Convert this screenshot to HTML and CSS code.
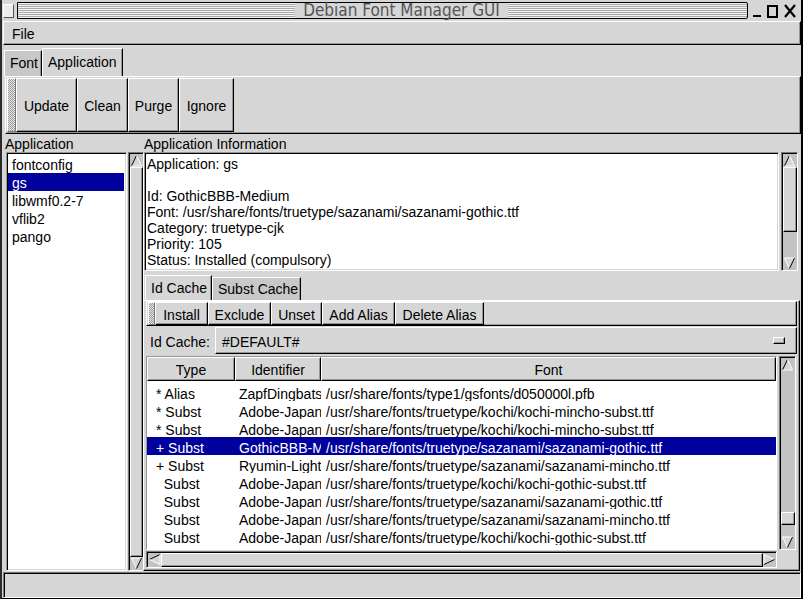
FILE: index.html
```html
<!DOCTYPE html>
<html>
<head>
<meta charset="utf-8">
<link rel="stylesheet" href="styles.css">
</head>
<body>
<div class="win">
  <div class="titlebar">
    <div class="ticon"></div>
    <div class="tstripe"><span class="ttext">Debian Font Manager GUI</span></div>
    <svg class="tbtns" width="48" height="18" viewBox="0 0 48 18">
      <rect x="1" y="13" width="8" height="2" fill="#000"/>
      <rect x="16" y="4" width="9" height="11" fill="none" stroke="#000" stroke-width="2"/>
      <path d="M33 3 L43 15 M43 3 L33 15" stroke="#000" stroke-width="2.2" fill="none"/>
    </svg>
  </div>
  <div class="menubar"><span class="menuitem">File</span></div>
  <div class="tabs">
    <div class="tab inactive t-font">Font</div>
    <div class="tab active t-app">Application</div>
  </div>
  <div class="page">
    <div class="toolbar big">
      <div class="handle"></div>
      <div class="tbtn b-update">Update</div>
      <div class="tbtn b-clean">Clean</div>
      <div class="tbtn b-purge">Purge</div>
      <div class="tbtn b-ignore">Ignore</div>
    </div>
    <div class="panes">
      <div class="leftpane">
        <div class="lbl">Application</div>
        <div class="listwrap">
          <div class="list">
            <div class="li">fontconfig</div>
            <div class="li sel">gs</div>
            <div class="li">libwmf0.2-7</div>
            <div class="li">vflib2</div>
            <div class="li">pango</div>
          </div>
          <div class="vs vs-left">
            <div class="arr"><svg width="13" height="13" viewBox="0 0 13 13"><path d="M1.5 12 L6.5 1.5 L11.5 12 Z" fill="#d6d6d6"/><path d="M1.5 12 L6.5 1.5" stroke="#000" fill="none"/><path d="M6.5 1.5 L11.5 12 L1.5 12" stroke="#fff" fill="none"/></svg></div>
            <div class="track"><div class="thumb full"></div></div>
            <div class="arr"><svg width="13" height="13" viewBox="0 0 13 13"><path d="M1.5 1 L6.5 11.5 L11.5 1 Z" fill="#d6d6d6"/><path d="M11.5 1 L1.5 1 L6.5 11.5" stroke="#fff" fill="none"/><path d="M6.5 11.5 L11.5 1" stroke="#000" fill="none"/></svg></div>
          </div>
        </div>
      </div>
      <div class="rightpane">
        <div class="lbl">Application Information</div>
        <div class="infowrap">
          <div class="info">
            <div class="il">Application: gs</div>
            <div class="il">&nbsp;</div>
            <div class="il">Id: GothicBBB-Medium</div>
            <div class="il">Font: /usr/share/fonts/truetype/sazanami/sazanami-gothic.ttf</div>
            <div class="il">Category: truetype-cjk</div>
            <div class="il">Priority: 105</div>
            <div class="il">Status: Installed (compulsory)</div>
          </div>
          <div class="vs vs-info">
            <div class="arr"><svg width="13" height="13" viewBox="0 0 13 13"><path d="M1.5 12 L6.5 1.5 L11.5 12 Z" fill="#d6d6d6"/><path d="M1.5 12 L6.5 1.5" stroke="#000" fill="none"/><path d="M6.5 1.5 L11.5 12 L1.5 12" stroke="#fff" fill="none"/></svg></div>
            <div class="track"><div class="thumb th-info"></div></div>
            <div class="arr"><svg width="13" height="13" viewBox="0 0 13 13"><path d="M1.5 1 L6.5 11.5 L11.5 1 Z" fill="#d6d6d6"/><path d="M11.5 1 L1.5 1 L6.5 11.5" stroke="#fff" fill="none"/><path d="M6.5 11.5 L11.5 1" stroke="#000" fill="none"/></svg></div>
          </div>
        </div>
        <div class="tabs2">
          <div class="tab active t-id">Id Cache</div>
          <div class="tab inactive t-subst">Subst Cache</div>
        </div>
        <div class="page2">
          <div class="toolbar small">
            <div class="handle"></div>
            <div class="tbtn b-install">Install</div>
            <div class="tbtn b-exclude">Exclude</div>
            <div class="tbtn b-unset">Unset</div>
            <div class="tbtn b-add">Add Alias</div>
            <div class="tbtn b-del">Delete Alias</div>
          </div>
          <div class="cacherow">
            <div class="clabel">Id Cache:</div>
            <div class="optmenu"><span>#DEFAULT#</span><div class="ind"></div></div>
          </div>
          <div class="tablearea">
            <div class="tleft">
              <div class="clist">
                <div class="thead">
                  <div class="th c1">Type</div>
                  <div class="th c2">Identifier</div>
                  <div class="th c3">Font</div>
                </div>
                <div class="rows">
                  <div class="row"><div class="td c1">* Alias</div><div class="td c2">ZapfDingbats</div><div class="td c3">/usr/share/fonts/type1/gsfonts/d050000l.pfb</div></div>
                  <div class="row"><div class="td c1">* Subst</div><div class="td c2">Adobe-Japan1</div><div class="td c3">/usr/share/fonts/truetype/kochi/kochi-mincho-subst.ttf</div></div>
                  <div class="row"><div class="td c1">* Subst</div><div class="td c2">Adobe-Japan1</div><div class="td c3">/usr/share/fonts/truetype/kochi/kochi-mincho-subst.ttf</div></div>
                  <div class="row sel"><div class="td c1">+ Subst</div><div class="td c2">GothicBBB-Medium</div><div class="td c3">/usr/share/fonts/truetype/sazanami/sazanami-gothic.ttf</div></div>
                  <div class="row"><div class="td c1">+ Subst</div><div class="td c2">Ryumin-Light</div><div class="td c3">/usr/share/fonts/truetype/sazanami/sazanami-mincho.ttf</div></div>
                  <div class="row"><div class="td c1">  Subst</div><div class="td c2">Adobe-Japan1</div><div class="td c3">/usr/share/fonts/truetype/kochi/kochi-gothic-subst.ttf</div></div>
                  <div class="row"><div class="td c1">  Subst</div><div class="td c2">Adobe-Japan1</div><div class="td c3">/usr/share/fonts/truetype/sazanami/sazanami-gothic.ttf</div></div>
                  <div class="row"><div class="td c1">  Subst</div><div class="td c2">Adobe-Japan1</div><div class="td c3">/usr/share/fonts/truetype/sazanami/sazanami-mincho.ttf</div></div>
                  <div class="row"><div class="td c1">  Subst</div><div class="td c2">Adobe-Japan1</div><div class="td c3">/usr/share/fonts/truetype/kochi/kochi-gothic-subst.ttf</div></div>
                </div>
              </div>
              <div class="hs">
                <div class="harr"><svg width="13" height="13" viewBox="0 0 13 13"><path d="M12 1.5 L1.5 6.5 L12 11.5 Z" fill="#d6d6d6"/><path d="M12 1.5 L1.5 6.5" stroke="#000" fill="none"/><path d="M1.5 6.5 L12 11.5 L12 1.5" stroke="#fff" fill="none"/></svg></div>
                <div class="htrack"><div class="thumb full"></div></div>
                <div class="harr"><svg width="13" height="13" viewBox="0 0 13 13"><path d="M1 1.5 L11.5 6.5 L1 11.5 Z" fill="#d6d6d6"/><path d="M1 11.5 L1 1.5 L11.5 6.5" stroke="#fff" fill="none"/><path d="M11.5 6.5 L1 11.5" stroke="#000" fill="none"/></svg></div>
              </div>
            </div>
            <div class="vs vs-table">
              <div class="arr"><svg width="13" height="13" viewBox="0 0 13 13"><path d="M1.5 12 L6.5 1.5 L11.5 12 Z" fill="#d6d6d6"/><path d="M1.5 12 L6.5 1.5" stroke="#000" fill="none"/><path d="M6.5 1.5 L11.5 12 L1.5 12" stroke="#fff" fill="none"/></svg></div>
              <div class="track"><div class="tsp"></div><div class="thumb th-table"></div></div>
              <div class="arr"><svg width="13" height="13" viewBox="0 0 13 13"><path d="M1.5 1 L6.5 11.5 L11.5 1 Z" fill="#d6d6d6"/><path d="M11.5 1 L1.5 1 L6.5 11.5" stroke="#fff" fill="none"/><path d="M6.5 11.5 L11.5 1" stroke="#000" fill="none"/></svg></div>
            </div>
          </div>
        </div>
      </div>
    </div>
  </div>
  <div class="status"></div>
</div>
</body>
</html>
```

FILE: styles.css
```css
* { box-sizing: border-box; }
html, body { margin: 0; padding: 0; }
body {
  background: #d6d6d6;
  font-family: "Liberation Sans", Arial, sans-serif;
  font-size: 14px;
  color: #000;
}
.win {
  width: 803px;
  height: 599px;
  display: flex;
  flex-direction: column;
  border-left: 2px solid #2a2a2a;
  border-right: 2px solid #000;
  border-bottom: 1px solid #000;
  background: #d6d6d6;
  overflow: hidden;
}

/* title bar */
.titlebar {
  height: 21px;
  flex: none;
  display: flex;
  align-items: center;
}
.ticon {
  width: 11px;
  height: 14px;
  margin-left: 1px;
  border: 1px solid;
  border-color: #fff #555 #555 #fff;
  background: #ececec;
}
.tstripe {
  flex: 1;
  height: 17px;
  margin-left: 3px;
  border: 1px solid #000;
  border-radius: 0 2px 2px 0;
  background: repeating-linear-gradient(to bottom, #f4f4f4 0 1px, #a9a9a9 1px 2px);
  display: flex;
  justify-content: center;
  align-items: center;
}
.ttext {
  background: #d6d6d6;
  padding: 0 8px;
  font-family: "DejaVu Sans Condensed", "DejaVu Sans", sans-serif;
  font-stretch: condensed;
  font-size: 17px;
  line-height: 15px;
  color: #555;
  margin-left: 38px;
}
.tbtns { margin: 0 1px 0 4px; flex: none; }

/* menu */
.menubar {
  height: 24px;
  flex: none;
  margin: 0 0 0 1px;
  border: 1px solid;
  border-color: #fff #000 #000 #fff;
  box-shadow: inset -1px -1px #969696;
  padding: 1px 0 0 8px;
  line-height: 22px;
}

/* tabs */
.tabs {
  height: 31px;
  flex: none;
  display: flex;
  align-items: flex-end;
  padding-left: 2px;
}
.tab {
  border: 1px solid;
  border-bottom: none;
  border-color: #fff #000 transparent #fff;
  box-shadow: inset -1px 0 #969696;
  white-space: nowrap;
}
.tab.inactive { background: #c8c8c8; }
.tab.active { background: #d6d6d6; }
.t-font { width: 38px; height: 26px; padding: 4px 0 0 5px; }
.t-app { width: 81px; height: 28px; padding: 5px 0 0 5px; }

.page {
  flex: 1;
  display: flex;
  flex-direction: column;
  padding-left: 2px;
}

/* toolbars */
.toolbar {
  display: flex;
  flex: none;
  border: 1px solid;
  border-color: #fff #000 #000 #fff;
  box-shadow: inset -1px -1px #969696;
}
.toolbar.big { height: 58px; margin-left: 1px; padding: 1px 0 1px 1px; }
.toolbar.small { height: 25px; padding: 0 0 0 1px; margin-right: 2px; }
.handle {
  flex: none;
  border: 1px solid;
  border-color: #fff #777 #777 #fff;
  background: repeating-conic-gradient(#9a9a9a 0 25%, #e6e6e6 0 50%) 0 0/2px 2px;
}
.big .handle { width: 9px; }
.small .handle { width: 7px; }
.tbtn {
  flex: none;
  border: 1px solid;
  border-color: #fff #000 #000 #fff;
  box-shadow: inset -1px -1px #969696;
  display: flex;
  align-items: center;
  justify-content: center;
  padding-top: 2px;
  white-space: nowrap;
}
.b-update { width: 61px; }
.b-clean { width: 51px; }
.b-purge { width: 51px; }
.b-ignore { width: 55px; }
.b-install { width: 53px; }
.b-exclude { width: 63px; }
.b-unset { width: 51px; }
.b-add { width: 73px; }
.b-del { width: 89px; }

/* panes */
.panes {
  flex: 1;
  display: flex;
  min-height: 0;
}
.lbl {
  height: 18px;
  flex: none;
  line-height: 18px;
  padding: 1px 0 0 1px;
  white-space: nowrap;
}
.leftpane {
  width: 139px;
  flex: none;
  display: flex;
  flex-direction: column;
}
.listwrap {
  flex: 1;
  display: flex;
  margin: 0 0 1px 2px;
}
.list {
  width: 121px;
  flex: none;
  background: #fff;
  border: 1px solid;
  border-color: #969696 #fff #fff #969696;
  box-shadow: inset 1px 1px #000, inset -1px -1px #d6d6d6;
  padding: 2px 2px 0 1px;
}
.li {
  height: 18px;
  line-height: 16px;
  padding: 2px 0 0 4px;
  white-space: nowrap;
}
.li.sel { background: #00009c; color: #fff; }

/* scrollbars */
.vs {
  flex: none;
  display: flex;
  flex-direction: column;
  background: #c3c3c3;
  border: 1px solid;
  border-color: #777 #fff #fff #777;
  box-shadow: inset 1px 1px #000;
  padding: 1px 0 0 1px;
}
.vs-left { width: 16px; margin-left: 1px; }
.vs-info { width: 17px; margin-left: 2px; }
.vs-table { width: 17px; margin-left: 2px; height: 194px; }
.arr { height: 13px; flex: none; }
.arr svg { display: block; }
.track {
  flex: 1;
  display: flex;
  flex-direction: column;
}
.thumb {
  background: #d6d6d6;
  border: 1px solid;
  border-color: #fff #000 #000 #fff;
  box-shadow: inset -1px -1px #969696;
}
.thumb.full { flex: 1; }
.th-info { height: 65px; }
.tsp { height: 141px; flex: none; }
.th-table { height: 13px; }

.hs {
  height: 17px;
  margin-top: 1px;
  display: flex;
  background: #c3c3c3;
  border: 1px solid;
  border-color: #777 #fff #fff #777;
  box-shadow: inset 1px 1px #000;
  padding: 1px 0 0 1px;
}
.harr { width: 13px; flex: none; }
.harr svg { display: block; }
.htrack { flex: 1; display: flex; }

/* right pane */
.rightpane {
  flex: 1;
  display: flex;
  flex-direction: column;
  min-width: 0;
}
.infowrap {
  height: 119px;
  flex: none;
  display: flex;
  margin: 0 3px 0 1px;
}
.info {
  width: 635px;
  flex: none;
  background: #fff;
  border: 1px solid;
  border-color: #969696 #fff #fff #969696;
  box-shadow: inset 1px 1px #000, inset -1px -1px #d6d6d6;
  padding: 3px 0 0 2px;
  overflow: hidden;
}
.il {
  height: 16px;
  line-height: 17px;
  white-space: nowrap;
}
.tabs2 {
  height: 29px;
  flex: none;
  display: flex;
  align-items: flex-end;
  padding-left: 2px;
}
.t-id { width: 67px; height: 25px; padding: 4px 0 0 5px; }
.t-subst { width: 89px; height: 23px; padding: 3px 0 0 5px; }
.page2 {
  flex: 1;
  margin: 0 1px 1px 0;
  border: 1px solid;
  border-color: #fff #000 #000 #fff;
  box-shadow: inset -1px -1px #969696;
  padding-left: 2px;
  display: flex;
  flex-direction: column;
}
.cacherow {
  height: 29px;
  flex: none;
  display: flex;
  align-items: center;
}
.clabel {
  width: 69px;
  flex: none;
  padding: 3px 0 0 4px;
  white-space: nowrap;
}
.optmenu {
  flex: 1;
  height: 27px;
  margin-right: 2px;
  border: 1px solid;
  border-color: #fff #000 #000 #fff;
  box-shadow: inset -1px -1px #969696;
  display: flex;
  align-items: center;
  justify-content: space-between;
  padding-left: 6px;
}
.optmenu span { padding-top: 3px; }
.ind {
  width: 12px;
  height: 7px;
  margin-right: 11px;
  border: 1px solid;
  border-color: #fff #000 #000 #fff;
  box-shadow: inset -1px -1px #969696;
}

.tablearea {
  display: flex;
  margin-top: 1px;
}
.tleft {
  width: 631px;
  flex: none;
  display: flex;
  flex-direction: column;
}
.clist {
  height: 194px;
  background: #fff;
  border: 1px solid;
  border-color: #969696 #fff #fff #969696;
  overflow: hidden;
}
.thead {
  display: flex;
  height: 24px;
  background: #d6d6d6;
}
.th {
  flex: none;
  border: 1px solid;
  border-color: #fff #000 #000 #fff;
  box-shadow: inset -1px -1px #969696;
  display: flex;
  align-items: center;
  justify-content: center;
  padding-top: 2px;
}
.c1 { width: 88px; }
.c2 { width: 86px; }
.c3 { width: 455px; }
.rows { padding-top: 2px; }
.row {
  display: flex;
  height: 18px;
  line-height: 18px;
}
.row.sel { background: #00009c; color: #fff; }
.td {
  flex: none;
  white-space: pre;
  overflow: hidden;
  padding-top: 2px;
}
.td.c1 { padding-left: 9px; }
.td.c2 { padding-left: 4px; }
.td.c3 { padding-left: 5px; }

/* status */
.status {
  height: 26px;
  flex: none;
  margin: 0 0 0 1px;
  border: 1px solid;
  border-color: #777 #fff #fff #777;
  box-shadow: inset 1px 1px #000;
}
```
